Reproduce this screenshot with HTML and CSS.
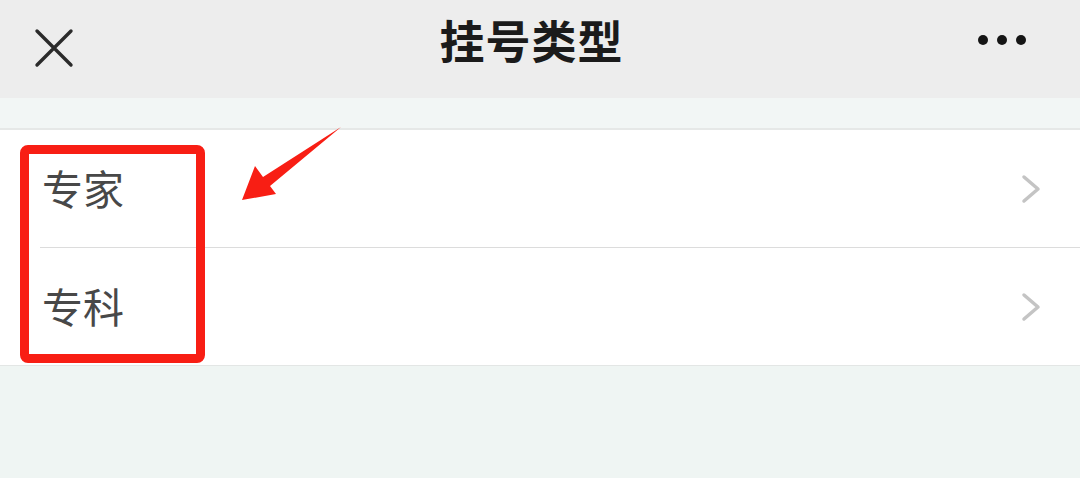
FILE: index.html
```html
<!DOCTYPE html>
<html lang="zh-CN">
<head>
    <meta charset="UTF-8">
    <meta name="viewport" content="width=device-width, initial-scale=1.0">
    <title>挂号类型</title>
    <link rel="stylesheet" href="styles.css">
</head>
<body>
    <div class="page">
        <header class="nav">
            <span class="nav-btn close">
                <svg width="40" height="40" viewBox="0 0 40 40">
                    <path d="M3 3 L37 37 M37 3 L3 37" stroke="#2b2b2b" stroke-width="3.4" stroke-linecap="round"/>
                </svg>
            </span>
            <h1 class="title">挂号类型</h1>
            <span class="nav-btn more">
                <svg width="52" height="14" viewBox="0 0 52 14">
                    <circle cx="6" cy="7" r="5" fill="#151515"/>
                    <circle cx="25" cy="7" r="5" fill="#151515"/>
                    <circle cx="44" cy="7" r="5" fill="#151515"/>
                </svg>
            </span>
        </header>
        <div class="gap"></div>

        <!-- Registration types -->
        <ul class="menu">
            <li class="item">
                <span class="label">专家</span>
                <svg class="chevron" width="22" height="30" viewBox="0 0 22 30">
                    <polyline points="4,3 18,15 4,27" fill="none" stroke="#c4c4c4" stroke-width="3.5" stroke-linecap="round" stroke-linejoin="round"/>
                </svg>
            </li>
            <li class="item">
                <span class="label">专科</span>
                <svg class="chevron" width="22" height="30" viewBox="0 0 22 30">
                    <polyline points="4,3 18,15 4,27" fill="none" stroke="#c4c4c4" stroke-width="3.5" stroke-linecap="round" stroke-linejoin="round"/>
                </svg>
            </li>
        </ul>

        <!-- Annotation marks drawn over the screenshot -->
        <div class="mark"></div>
        <svg class="pointer" width="120" height="90" viewBox="0 0 120 90">
            <polygon points="111,7 40,66 46,74 12,80 25,46 33,57" fill="#f81e14"/>
        </svg>
    </div>
</body>
</html>
```

FILE: styles.css
```css
html, body {
    margin: 0;
    padding: 0;
}
body {
    background-color: #eff5f3;
    font-family: "Noto Sans CJK SC", "Noto Sans", sans-serif;
}
.page {
    position: relative;
    width: 1080px;
    height: 478px;
    overflow: hidden;
}

/* Top bar */
.nav {
    height: 98px;
    background-color: #ededed;
    display: grid;
    grid-template-columns: 1fr auto 1fr;
    align-items: center;
    padding: 0 51px 0 34px;
}
.nav-btn {
    display: flex;
    align-items: center;
}
.close {
    justify-self: start;
    margin-top: -3px;
}
.more {
    justify-self: end;
    margin-top: -18px;
}
.title {
    margin: -20px 0 0 0;
    font-size: 45px;
    font-weight: bold;
    color: #1b1b1b;
    letter-spacing: 1px;
}
.gap {
    height: 30px;
    background-color: #f2f6f5;
    border-bottom: 2px solid #e6e8e7;
}

/* List */
.menu {
    list-style: none;
    margin: 0;
    padding: 0;
    background-color: #fff;
    border-bottom: 1px solid #e3e6e5;
}
.item {
    height: 117px;
    margin-left: 40px;
    padding: 0 38px 0 2px;
    display: flex;
    align-items: center;
    justify-content: space-between;
}
.item + .item {
    border-top: 1px solid #dcdcdc;
}
.label {
    font-size: 41px;
    color: #484848;
    margin-top: -4px;
}

/* Annotations */
.mark {
    position: absolute;
    left: 20px;
    top: 145px;
    width: 167px;
    height: 200px;
    border: 9px solid #f81e14;
    border-radius: 8px;
}
.pointer {
    position: absolute;
    left: 230px;
    top: 120px;
}
```
